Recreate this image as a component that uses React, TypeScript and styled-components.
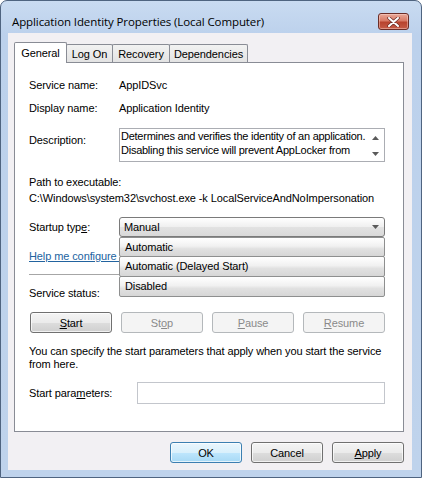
import React from "react";
import styled, { createGlobalStyle } from "styled-components";

const Global = createGlobalStyle`
  html, body { margin: 0; padding: 0; background: #ffffff; }
  body {
    font-family: "Liberation Sans", Arial, sans-serif;
    font-size: 11px;
    letter-spacing: -0.1px;
    color: #000;
  }
  * { box-sizing: border-box; }
`;

const Window = styled.div`
  width: 422px;
  height: 478px;
  border: 1px solid #4f6480;
  border-radius: 7px 7px 0 0;
  background: linear-gradient(#c9dbf1, #bcd1ec 34px, #bfd3ec);
  display: flex;
  flex-direction: column;
  padding: 0 9px 7px 7px;
`;

const TitleBar = styled.div`
  height: 32px;
  display: flex;
  align-items: flex-start;
  justify-content: space-between;
`;

const TitleText = styled.div`
  margin: 13px 0 0 4px;
  font-family: "Open Sans", "Liberation Sans", sans-serif;
  font-size: 11.5px;
  letter-spacing: -0.1px;
  line-height: 16px;
  color: #000;
`;

const CloseButton = styled.div`
  margin: 12px 3px 0 0;
  width: 31px;
  height: 17px;
  border: 1px solid #6b2d27;
  border-radius: 3px;
  background: linear-gradient(#e9a898, #d87a66 45%, #b8432e 55%, #c65c47);
  box-shadow: inset 0 0 0 1px rgba(255, 220, 210, 0.45);
  display: flex;
  align-items: center;
  justify-content: center;
`;

const Client = styled.div`
  flex: 1;
  background: #f2f0f3;
  padding: 9px 8px 7px 6px;
  display: flex;
  flex-direction: column;
`;

const TabStrip = styled.div`
  height: 21px;
  display: flex;
  align-items: flex-end;
  margin-bottom: -1px;
  position: relative;
  z-index: 2;
`;

const Tab = styled.div<{ $w: number; $active?: boolean }>`
  width: ${(p) => p.$w}px;
  height: ${(p) => (p.$active ? 21 : 18)}px;
  margin-left: -1px;
  margin-bottom: ${(p) => (p.$active ? 0 : 1)}px;
  border: 1px solid #898c95;
  border-bottom: none;
  border-radius: 2px 2px 0 0;
  background: ${(p) => (p.$active ? "#ffffff" : "linear-gradient(#f2f2f2, #e3e3e3)")};
  display: flex;
  align-items: center;
  justify-content: center;
  padding-bottom: ${(p) => (p.$active ? 1 : 0)}px;
  &:first-child { margin-left: 0; }
`;

const Panel = styled.div`
  border: 1px solid #898c95;
  background: #ffffff;
  padding: 16px 18px 27px 14px;
  display: flex;
  flex-direction: column;
  position: relative;
  z-index: 1;
`;

const Row = styled.div<{ $label?: number; $mt?: number; $top?: boolean }>`
  display: grid;
  grid-template-columns: ${(p) => p.$label ?? 90}px 1fr;
  align-items: ${(p) => (p.$top ? "start" : "center")};
  margin-top: ${(p) => p.$mt ?? 0}px;
  line-height: 13px;
`;

const Label = styled.div<{ $pt?: number }>`
  padding-top: ${(p) => p.$pt ?? 0}px;
  white-space: nowrap;
`;

const Value = styled.div`
  white-space: nowrap;
`;

const DescBox = styled.div`
  height: 34px;
  border: 1px solid #abadb3;
  background: #fff;
  display: flex;
  overflow: hidden;
`;

const DescText = styled.div`
  flex: 1;
  padding: 0 0 0 1px;
  line-height: 14px;
  letter-spacing: -0.25px;
  overflow: hidden;
`;

const Line = styled.div`
  white-space: nowrap;
`;

const ScrollCol = styled.div`
  width: 17px;
  flex: none;
  display: flex;
  flex-direction: column;
  align-items: center;
  justify-content: space-between;
  padding: 7px 0 5px;
`;

const PathBlock = styled.div`
  margin-top: 12px;
  line-height: 16px;
  white-space: nowrap;
`;

const ComboWrap = styled.div`
  position: relative;
  z-index: 3;
`;

const Combo = styled.div`
  height: 20px;
  border: 1px solid #7a7a7a;
  border-radius: 3px;
  background: linear-gradient(#ffffff, #efefef 50%, #e2e2e2 51%, #d9d9d9);
  display: flex;
  align-items: center;
  justify-content: space-between;
  padding: 0 5px 0 4px;
`;

const DropList = styled.div`
  position: absolute;
  left: 0;
  right: 0;
  top: 100%;
  display: flex;
  flex-direction: column;
`;

const DropItem = styled.div`
  height: 21px;
  margin-top: -1px;
  border: 1px solid #8e8f8f;
  border-radius: 2px;
  background: linear-gradient(#ffffff, #f1f1f1 45%, #e1e1e1 60%, #d6d6d6);
  display: flex;
  align-items: center;
  padding: 0 5px;
  &:first-child { margin-top: 0; height: 20px; }
`;

const Link = styled.div`
  margin-top: 13px;
  line-height: 13px;
  color: #22639f;
  text-decoration: underline;
  white-space: nowrap;
`;

const Separator = styled.div`
  margin-top: 11px;
  height: 1px;
  background: #a6a6a6;
`;

const ButtonRow = styled.div`
  margin-top: 12px;
  display: grid;
  grid-template-columns: repeat(4, 1fr);
  gap: 9px;
  padding-left: 1px;
`;

const Button = styled.div<{ $disabled?: boolean; $default?: boolean; $w?: number }>`
  height: 21px;
  width: ${(p) => (p.$w ? `${p.$w}px` : "auto")};
  border: 1px solid
    ${(p) => (p.$disabled ? "#b4b8bb" : p.$default ? "#3c7fb1" : "#707070")};
  border-radius: 3px;
  background: ${(p) =>
    p.$disabled
      ? "#f4f4f4"
      : p.$default
      ? "linear-gradient(#eaf6fd, #d9f0fc 50%, #bee6fd 51%, #a7d9f5)"
      : "linear-gradient(#f4f4f4, #ebebeb 50%, #dddddd 51%, #cfcfcf)"};
  box-shadow: ${(p) => (p.$disabled ? "none" : "inset 0 0 0 1px rgba(255,255,255,0.7)")};
  color: ${(p) => (p.$disabled ? "#8a8a8a" : "#000")};
  display: flex;
  align-items: center;
  justify-content: center;
`;

const Key = styled.span`
  text-decoration: underline;
`;

const Para = styled.div`
  margin-top: 12px;
  line-height: 13px;
`;

const Input = styled.div`
  height: 22px;
  border: 1px solid #c3c6cc;
  background: #fff;
`;

const Footer = styled.div`
  margin-top: 10px;
  display: flex;
  justify-content: flex-end;
  gap: 9px;
`;

const ArrowUp = () => (
  <svg width="7" height="4" viewBox="0 0 7 4">
    <path d="M0 4 L3.5 0 L7 4 Z" fill="#5a5a5a" />
  </svg>
);
const ArrowDown = () => (
  <svg width="7" height="4" viewBox="0 0 7 4">
    <path d="M0 0 L7 0 L3.5 4 Z" fill="#5a5a5a" />
  </svg>
);

export default function App() {
  return (
    <>
      <Global />
      <Window>
        <TitleBar>
          <TitleText>Application Identity Properties (Local Computer)</TitleText>
          <CloseButton>
            <svg width="13" height="10" viewBox="0 0 13 10">
              <path d="M2 1 L11 9 M11 1 L2 9" stroke="#6b2d27" strokeWidth="3.4" strokeLinecap="round" />
              <path d="M2 1 L11 9 M11 1 L2 9" stroke="#ffffff" strokeWidth="2" strokeLinecap="round" />
            </svg>
          </CloseButton>
        </TitleBar>
        <Client>
          <TabStrip>
            <Tab $w={53} $active>General</Tab>
            <Tab $w={47}>Log On</Tab>
            <Tab $w={58}>Recovery</Tab>
            <Tab $w={79}>Dependencies</Tab>
          </TabStrip>
          <Panel>
            <Row>
              <Label>Service name:</Label>
              <Value>AppIDSvc</Value>
            </Row>
            <Row $mt={10}>
              <Label>Display name:</Label>
              <Value>Application Identity</Value>
            </Row>
            <Row $mt={13} $top>
              <Label $pt={6}>Description:</Label>
              <DescBox>
                <DescText>
                  <Line>Determines and verifies the identity of an application.</Line>
                  <Line>Disabling this service will prevent AppLocker from</Line>
                </DescText>
                <ScrollCol>
                  <ArrowUp />
                  <ArrowDown />
                </ScrollCol>
              </DescBox>
            </Row>
            <PathBlock>
              <div>Path to executable:</div>
              <div>{"C:\\Windows\\system32\\svchost.exe -k LocalServiceAndNoImpersonation"}</div>
            </PathBlock>
            <Row $mt={11}>
              <Label>
                Startup typ<Key>e</Key>:
              </Label>
              <ComboWrap>
                <Combo>
                  <span>Manual</span>
                  <ArrowDown />
                </Combo>
                <DropList>
                  <DropItem>Automatic</DropItem>
                  <DropItem>Automatic (Delayed Start)</DropItem>
                  <DropItem>Disabled</DropItem>
                </DropList>
              </ComboWrap>
            </Row>
            <Link>Help me configure service startup options.</Link>
            <Separator />
            <Row $mt={12}>
              <Label>Service status:</Label>
            </Row>
            <ButtonRow>
              <Button>
                <span><Key>S</Key>tart</span>
              </Button>
              <Button $disabled>
                <span>St<Key>o</Key>p</span>
              </Button>
              <Button $disabled>
                <span><Key>P</Key>ause</span>
              </Button>
              <Button $disabled>
                <span><Key>R</Key>esume</span>
              </Button>
            </ButtonRow>
            <Para>
              <Line>You can specify the start parameters that apply when you start the service</Line>
              <Line>from here.</Line>
            </Para>
            <Row $label={108} $mt={11}>
              <Label>
                Start para<Key>m</Key>eters:
              </Label>
              <Input />
            </Row>
          </Panel>
          <Footer>
            <Button $default $w={72}>OK</Button>
            <Button $w={72}>Cancel</Button>
            <Button $w={72}>
              <span><Key>A</Key>pply</span>
            </Button>
          </Footer>
        </Client>
      </Window>
    </>
  );
}
